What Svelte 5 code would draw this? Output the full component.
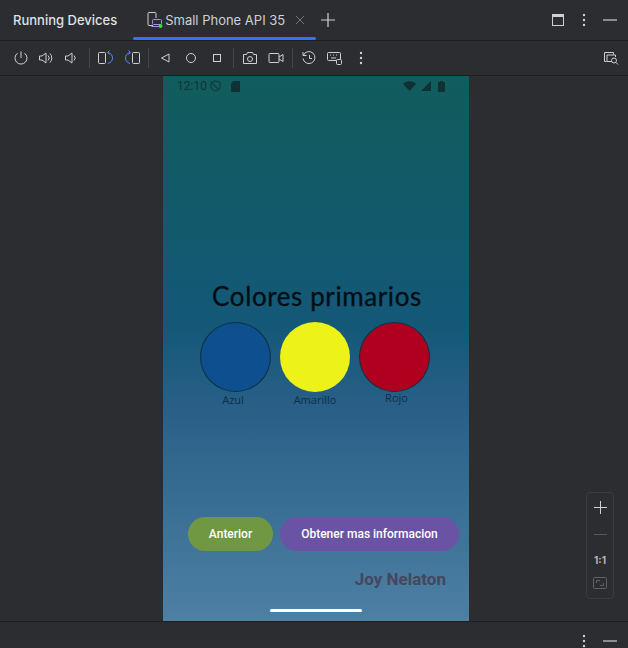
<script>
	const colors = [
		{ name: 'Azul', fill: '#0d4f8f', cls: 'azul' },
		{ name: 'Amarillo', fill: '#edf218', cls: 'amarillo' },
		{ name: 'Rojo', fill: '#b00020', cls: 'rojo' }
	];
</script>

<div class="window">
	<header class="tabs">
		<span class="title">Running Devices</span>
		<div class="tab">
			<svg width="18" height="18" viewBox="0 0 18 18" fill="none">
				<path d="M7 14.500H3a1 1 0 0 1-1-1V2.500a1 1 0 0 1 1-1h6a1 1 0 0 1 1 1V7" stroke="#ced0d6" />
				<rect x="6.500" y="8.500" width="9" height="5" rx="1" stroke="#b189f5" />
				<path d="M5.500 15.500h8" stroke="#b189f5" />
				<circle cx="14.500" cy="15" r="2" fill="#3ddc3d" />
			</svg>
			<span>Small Phone API 35</span>
			<svg class="close" width="10" height="10" viewBox="0 0 10 10"><path d="M1 1l8 8M9 1l-8 8" stroke="#6f737a" /></svg>
		</div>
		<svg class="plus" width="14" height="14" viewBox="0 0 14 14"><path d="M7 0v14M0 7h14" stroke="#ced0d6" stroke-width="1.200" /></svg>
		<div class="spacer"></div>
		<svg class="ic" width="12" height="12" viewBox="0 0 12 12"><rect x=".5" y=".5" width="11" height="11" fill="none" stroke="#ced0d6" /><rect x="0" y="0" width="12" height="3" fill="#ced0d6" /></svg>
		<svg class="dots-a" width="4" height="14" viewBox="0 0 4 14"><circle cx="2" cy="2" r="1.200" fill="#ced0d6" /><circle cx="2" cy="7" r="1.200" fill="#ced0d6" /><circle cx="2" cy="12" r="1.200" fill="#ced0d6" /></svg>
		<div class="minus"></div>
	</header>

	<nav class="toolbar">
		<svg class="t" style="margin-left:13px" width="16" height="16" viewBox="0 0 16 16" fill="none" stroke="#ced0d6"><path d="M4.500 3.200a6 6 0 1 0 7 0" /><path d="M8 1.500V8" /></svg>
		<svg class="t" style="margin-left:9px" width="16" height="16" viewBox="0 0 16 16" fill="none" stroke="#ced0d6"><path d="M1.500 6h2.500L8 3v10L4 10H1.500z" /><path d="M10 5.500a3.500 3.500 0 0 1 0 5M12 3.500a6.500 6.500 0 0 1 0 9" /></svg>
		<svg class="t" style="margin-left:9px" width="16" height="16" viewBox="0 0 16 16" fill="none" stroke="#ced0d6"><path d="M2.500 6h2.500L9 3v10L5 10H2.500z" /><path d="M11 5.500a3.500 3.500 0 0 1 0 5" /></svg>
		<i class="sep" style="margin-left:10px"></i>
		<svg class="t" style="margin-left:8px" width="16" height="16" viewBox="0 0 16 16" fill="none"><rect x=".5" y="2.500" width="7" height="11" rx="1" stroke="#ced0d6" /><path d="M10 2.500c3 .8 4.500 3 4.500 5.500s-1.500 4.700-4.500 5.500M11.500 .5l-2 2 2 2" stroke="#548af7" /></svg>
		<svg class="t" style="margin-left:10px" width="16" height="16" viewBox="0 0 16 16" fill="none"><rect x="8.500" y="2.500" width="7" height="11" rx="1" stroke="#ced0d6" /><path d="M6 2.500c-3 .8-4.500 3-4.500 5.500s1.500 4.700 4.500 5.500M4.500 .5l2 2-2 2" stroke="#548af7" /></svg>
		<i class="sep" style="margin-left:8px"></i>
		<svg class="t" style="margin-left:8px" width="16" height="16" viewBox="0 0 16 16" fill="none" stroke="#ced0d6"><path d="M12 4v8L4.500 8z" /></svg>
		<svg class="t" style="margin-left:10px" width="16" height="16" viewBox="0 0 16 16" fill="none" stroke="#ced0d6"><circle cx="8" cy="8" r="4.500" /></svg>
		<svg class="t" style="margin-left:10px" width="16" height="16" viewBox="0 0 16 16" fill="none" stroke="#ced0d6"><rect x="4.500" y="4.500" width="7" height="7" /></svg>
		<i class="sep" style="margin-left:8px"></i>
		<svg class="t" style="margin-left:8px" width="16" height="16" viewBox="0 0 16 16" fill="none" stroke="#ced0d6"><path d="M1.500 4.500h3l1-2h5l1 2h3v9h-13z" /><circle cx="8" cy="9" r="2.500" /></svg>
		<svg class="t" style="margin-left:10px" width="16" height="16" viewBox="0 0 16 16" fill="none" stroke="#ced0d6"><rect x="1" y="3.500" width="10" height="9" rx="1" /><path d="M11 7l4-2.500v7L11 9" /></svg>
		<i class="sep" style="margin-left:8px"></i>
		<svg class="t" style="margin-left:8px" width="16" height="16" viewBox="0 0 16 16" fill="none" stroke="#ced0d6"><path d="M2.500 5A6 6 0 1 1 2 8.500" /><path d="M2 2v3.500h3.500" /><path d="M8.500 5v3.500H11" /></svg>
		<svg class="t" style="margin-left:10px" width="16" height="16" viewBox="0 0 16 16" fill="none" stroke="#ced0d6"><rect x=".5" y="2.500" width="13" height="8" rx="1" /><path d="M3 5h1M6 5h1M9 5h1M4 8h5" /><rect x="9.500" y="9.500" width="5" height="5" rx="1" fill="#2b2d30" /></svg>
		<svg class="t" style="margin-left:16px" width="4" height="14" viewBox="0 0 4 14"><circle cx="2" cy="2" r="1.200" fill="#ced0d6" /><circle cx="2" cy="7" r="1.200" fill="#ced0d6" /><circle cx="2" cy="12" r="1.200" fill="#ced0d6" /></svg>
		<div class="spacer"></div>
		<svg class="t find" width="16" height="16" viewBox="0 0 16 16" fill="none" stroke="#ced0d6"><path d="M3.500 11.500h-2v-9h9v2" /><path d="M9 11.500H4V5h8.500v2" /><circle cx="11" cy="10.500" r="2.500" /><path d="M13 12.500l2 2" /></svg>
	</nav>

	<main class="stage">
		<section class="phone">
			<div class="status">
				<span class="clock">12:10</span>
				<svg width="11" height="12" viewBox="0 0 11 12" fill="none" stroke="#123c40" stroke-width="1.200"><path d="M5.500 1l4.500 1.500v3.500c0 2.500-2 4.300-4.500 5C3 10.300 1 8.500 1 6V2.500z" /><path d="M2 3l7 7" /></svg>
				<svg class="sd" width="9" height="11" viewBox="0 0 9 11"><path d="M2.500 0H8a1 1 0 0 1 1 1v9a1 1 0 0 1-1 1H1a1 1 0 0 1-1-1V3z" fill="#0f3136" /></svg>
				<div class="spacer"></div>
				<svg width="13" height="10" viewBox="0 0 13 10"><path d="M0 3C3.500-.8 9.500-.8 13 3L6.500 10z" fill="#0f3136" /></svg>
				<svg class="sig" width="10" height="10" viewBox="0 0 10 10"><path d="M10 0v10H0z" fill="#0f3136" /></svg>
				<svg class="bat" width="7" height="11" viewBox="0 0 7 11"><path d="M2 0h3v1h1a1 1 0 0 1 1 1v8a1 1 0 0 1-1 1H1a1 1 0 0 1-1-1V2a1 1 0 0 1 1-1h1z" fill="#0f3136" /></svg>
			</div>

			<h1>Colores primarios</h1>

			<div class="colors">
				{#each colors as c}
					<div class="color {c.cls}">
						<div class="circle" style="background:{c.fill}"></div>
						<span>{c.name}</span>
					</div>
				{/each}
			</div>

			<div class="actions">
				<button class="prev">Anterior</button>
				<button class="more">Obtener mas informacion</button>
			</div>

			<p class="author">Joy Nelaton</p>
			<div class="home"></div>
		</section>

		<aside class="zoom">
			<svg width="13" height="13" viewBox="0 0 13 13"><path d="M6.500 0v13M0 6.500h13" stroke="#ced0d6" /></svg>
			<div class="zoom-out"></div>
			<b>1:1</b>
			<svg width="14" height="12" viewBox="0 0 14 12" fill="none" stroke="#5f6268"><rect x=".5" y=".5" width="13" height="11" rx="1" /><path d="M3.500 6V3.500H7M10.500 6v2.500H7" /></svg>
		</aside>
	</main>

	<footer class="bottom">
		<svg width="4" height="14" viewBox="0 0 4 14"><circle cx="2" cy="2" r="1.200" fill="#ced0d6" /><circle cx="2" cy="7" r="1.200" fill="#ced0d6" /><circle cx="2" cy="12" r="1.200" fill="#ced0d6" /></svg>
		<div class="minus"></div>
	</footer>
</div>

<style>
	:global(body) {
		margin: 0;
		background: #2b2d30;
		font-family: Inter, 'Liberation Sans', sans-serif;
	}

	.window {
		width: 628px;
		height: 648px;
		display: flex;
		flex-direction: column;
		overflow: hidden;
		background: #2b2d30;
		color: #ced0d6;
	}

	.spacer {
		flex: 1;
	}

	.tabs {
		height: 40px;
		flex: none;
		display: flex;
		align-items: center;
		border-bottom: 1px solid #1e1f22;
	}

	.title {
		margin-left: 13px;
		font-size: 13px;
		font-weight: 500;
		color: #dfe1e5;
	}

	.tab {
		position: relative;
		width: 183px;
		height: 40px;
		margin-left: 16px;
		box-sizing: border-box;
		padding-left: 13px;
		display: flex;
		align-items: center;
		gap: 1px;
		font-size: 13px;
		color: #ced0d6;
		flex: none;
	}

	.tab::after {
		content: '';
		position: absolute;
		left: 0;
		right: 0;
		bottom: 0;
		height: 3px;
		border-radius: 2px;
		background: #3574f0;
	}

	.close {
		margin-left: 9px;
	}

	.plus {
		margin-left: 5px;
	}

	.ic {
		margin-right: 18px;
	}

	.dots-a {
		margin-right: 17px;
	}

	.minus {
		width: 14px;
		height: 2px;
		margin-right: 11px;
		background: #8a8d93;
	}

	.toolbar {
		height: 34px;
		flex: none;
		display: flex;
		align-items: center;
		border-bottom: 1px solid #1e1f22;
	}

	.t {
		flex: none;
	}

	.sep {
		width: 1px;
		height: 20px;
		flex: none;
		background: #43454a;
	}

	.find {
		margin-right: 9px;
	}

	.stage {
		position: relative;
		height: 546px;
		flex: none;
		display: flex;
		justify-content: flex-start;
		border-bottom: 1px solid #1e1f22;
		box-sizing: border-box;
	}

	.phone {
		position: relative;
		width: 306px;
		height: 545px;
		margin-left: 163px;
		display: flex;
		flex-direction: column;
		align-items: center;
		background: linear-gradient(180deg, #115c5c 0%, #145878 46%, #2a6088 62%, #4d80a3 100%);
	}

	.status {
		align-self: stretch;
		height: 20px;
		padding: 0 24px 0 14px;
		display: flex;
		align-items: center;
		gap: 3px;
		font-family: Roboto, sans-serif;
		font-size: 12px;
		color: #123338;
	}

	.sd {
		margin-left: 7px;
	}

	.sig {
		margin-left: 2px;
	}

	.bat {
		margin-left: 4px;
	}

	h1 {
		margin: 185px 0 0 2px;
		font-family: Lato, sans-serif;
		font-size: 26px;
		line-height: 30px;
		font-weight: 400;
		letter-spacing: 0.6px;
		color: #030d14;
		-webkit-text-stroke: 0.3px #030d14;
	}

	.colors {
		display: flex;
		margin-top: 11px;
		margin-right: 2px;
		gap: 9px;
	}

	.color {
		display: flex;
		flex-direction: column;
		align-items: center;
		font-family: 'Open Sans', sans-serif;
		font-size: 11px;
		line-height: 14px;
		color: #0f2f44;
	}

	.circle {
		box-sizing: border-box;
		width: 71px;
		height: 70px;
		border-radius: 50%;
		border: 1px solid #0f3040;
		margin-bottom: 1px;
	}

	.amarillo .circle {
		width: 70px;
		border-color: transparent;
	}

	.azul span {
		margin-right: 5px;
	}

	.rojo span {
		margin-top: -2px;
		margin-left: 4px;
	}

	.actions {
		display: flex;
		gap: 7px;
		margin-top: 110px;
		margin-left: 15px;
	}

	button {
		height: 34px;
		border: 0;
		border-radius: 17px;
		padding: 0;
		font-family: Roboto, sans-serif;
		font-size: 12px;
		font-weight: 500;
		color: #fff;
	}

	.prev {
		width: 85px;
		background: #709843;
	}

	.more {
		width: 179px;
		background: #6a52a5;
	}

	.author {
		align-self: flex-end;
		margin: 18px 23px 0 0;
		font-family: Roboto, sans-serif;
		font-size: 17px;
		line-height: 20px;
		font-weight: 700;
		color: #47465c;
	}

	.home {
		width: 92px;
		height: 3px;
		margin-top: 20px;
		border-radius: 2px;
		background: #fff;
	}

	.zoom {
		position: absolute;
		left: 586px;
		top: 416px;
		width: 28px;
		height: 107px;
		box-sizing: border-box;
		padding-top: 8px;
		display: flex;
		flex-direction: column;
		align-items: center;
		border: 1px solid #393b40;
		border-radius: 4px;
	}

	.zoom-out {
		width: 13px;
		height: 1px;
		margin-top: 20px;
		background: #55585e;
	}

	.zoom b {
		margin: 19px 0 11px;
		font-size: 10px;
		line-height: 12px;
		color: #b4b6bb;
	}

	.bottom {
		flex: 1;
		display: flex;
		align-items: flex-end;
		justify-content: flex-end;
		gap: 17px;
	}

	.bottom .minus {
		margin-bottom: 6px;
	}
</style>
